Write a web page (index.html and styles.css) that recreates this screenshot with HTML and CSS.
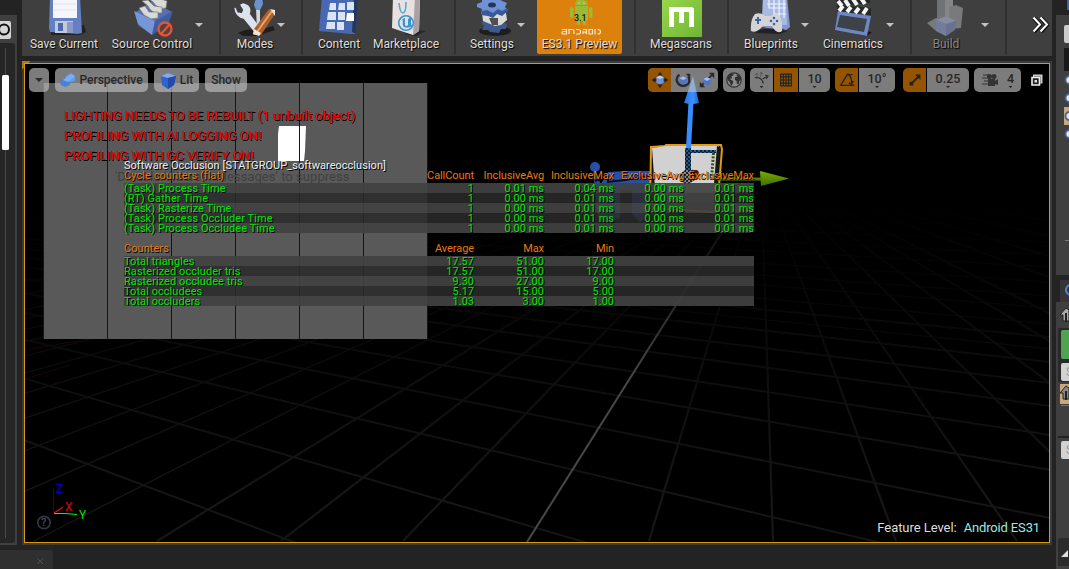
FILE: index.html
```html
<!DOCTYPE html>
<html lang="en">
<head>
<meta charset="utf-8">
<title>Level Editor</title>
<link rel="stylesheet" href="styles.css">
</head>
<body>
<div class="editor">
  <aside class="left-dock">
    <svg width="22" height="569">
      <rect y="15" width="17" height="530" fill="#3f3f3f"/>
      <rect x="-4" y="43" width="19" height="500" rx="3" fill="#262626"/>
      <rect x="-4" y="21" width="15" height="18" rx="2" fill="#d6d6d6"/>
      <circle cx="4" cy="29.500" r="5" fill="none" stroke="#111" stroke-width="2"/>
      <path d="M5.500 48V538" stroke="#4a4a4a"/>
      <rect x="2" y="75" width="7" height="75" rx="1.500" fill="#fff"/>
    </svg>
  </aside>

  <main class="center">
    <nav class="toolbar">
      <div class="group g-file">
        <button class="tool save"><svg class="icon" viewBox="0 0 56 37">
          <path d="M15 29L48 25 50 32 44 35H15Z" fill="#151515" opacity=".7"/>
          <path d="M14-4H44L46 33 42 34 14 32 13 28Z" fill="#6480c2"/>
          <path d="M17-4H41V18H17Z" fill="#f4f6fb"/><path d="M18 4H40M18 10H40" stroke="#dde2ee"/>
          <path d="M19 21H37V33H19Z" fill="#c3c9d8"/><path d="M22 23H27V31H22Z" fill="#4f68ad"/><path d="M31 22H37V33H31Z" fill="#8998c6"/>
        </svg><span>Save Current</span></button>
        <button class="tool source"><svg class="icon" viewBox="0 0 56 37">
          <path d="M12 12L28 1 48 12 44 20 28 35 14 25Z" fill="#5571b1"/>
          <path d="M10 11L31 21 28 35 14 24Z" fill="#7796d7"/><path d="M31 21L49 11 44 25 28 35Z" fill="#425d9d"/>
          <g fill="#d8dad8" stroke="#777" stroke-width=".7"><path d="M22-3L27-4 43 1 42 8Q34 10 29 2Z"/><path d="M18 1L24 0 30 6 38 7 38 13Q27 14 24 6Z"/><path d="M15 8L21 6 25 12 34 12 34 18 27 19 20 15Z"/></g>
          <circle cx="41" cy="29" r="6.500" fill="#4d4542" stroke="#e55335" stroke-width="2.300"/><path d="M37 34L46 24" stroke="#e55335" stroke-width="2.300"/>
        </svg><span>Source Control</span></button>
        <i class="caret"></i>
      </div>
      <div class="group g-modes">
        <button class="tool modes"><svg class="icon" viewBox="0 0 56 37">
          <path d="M11 33Q22 27 28 31L46 26 48 30 30 36H16Z" fill="#161616" opacity=".8"/>
          <path d="M14 5L17 10 15 14 10 13 8 8Q9 17 17 18L30 34Q34 34 34 30L22 14Q25 6 16 4Z" fill="#dce3ec" stroke="#dce3ec" stroke-width="1.400"/>
          <path d="M29 8H33V31H30Z" fill="#cfd7df"/><path d="M29-2Q32 1 35-4L36 4 33 10H29L27 5Z" fill="#6d91cb"/>
          <path d="M42 9L48 14 34 35 26 35 27 29Z" fill="#ab602e"/><path d="M45 11L30 32" stroke="#e6a46b" stroke-width="2"/><path d="M43 9L48 10V16Z" fill="#eee3d7"/><path d="M27 29L34 33 32 36 26 34Z" fill="#f4e6d3"/>
        </svg><span>Modes</span></button>
        <i class="caret"></i>
      </div>
      <div class="group g-content">
        <button class="tool content"><svg class="icon" viewBox="0 0 56 37">
          <path d="M11-4H46L45 34 40 34 8 31Z" fill="#4968b2"/><path d="M43-4H47L45 34 41 32Z" fill="#26375f"/>
          <g fill="#d9e3f6"><path d="M19 3H25V10H18ZM28 3H34V10H27ZM36 2H43V10H36ZM17 12H25V20H16ZM27 12H34V20H27ZM16 22H24V29H15ZM26 22H33V30H26Z"/></g><path d="M36 13H43V21H35Z" fill="#fff"/>
        </svg><span>Content</span></button>
        <button class="tool market"><svg class="icon" viewBox="0 0 56 37">
          <path d="M38 30L48 31 38 36 26 34Z" fill="#171717" opacity=".6"/>
          <path d="M15-3L42-3 41 31 35 35 14 28Z" fill="#e7e2e1"/><path d="M37-3H42L41 31 35 35Z" fill="#aaa1a5"/>
          <path d="M21 3Q22 13 25 13T28 2" fill="none" stroke="#5ba6d6" stroke-width="1.600"/>
          <circle cx="28" cy="23" r="7.300" fill="none" stroke="#3c94cf" stroke-width="1.600"/>
          <path d="M23 21Q25 18 27 18V25Q28 27 30 25V19L33 17V24L34 26Q30 29 26 27Q24 26 25 20Z" fill="#3c94cf"/>
        </svg><span>Marketplace</span></button>
      </div>
      <div class="group g-settings">
        <button class="tool settings"><svg class="icon" viewBox="0 0 56 37">
          <ellipse cx="31" cy="31" rx="16" ry="5" fill="#161616" opacity=".8"/>
          <path d="M17 22L24 20 36 21 43 24 42 29 37 29 35 33 26 32 24 30 18 30 20 26Z" fill="#40588b"/>
          <path d="M18 13H42L43 20 37 25 31 26 19 21Z" fill="#d9dad6"/><path d="M25 18H34V25H28Z" fill="#4e5050"/>
          <path d="M13 4L18 2 18-2 26-1 33-3 38 1 43 3 41 7 44 10 38 14 33 13 29 17 24 14 17 14 18 9 13 7Z" fill="#6f91d5"/><path d="M18 11L23 10 29 13 34 9 38 11 43 8 44 11 38 16 33 14 29 18 24 16 17 15Z" fill="#395998"/>
          <ellipse cx="28" cy="5" rx="4" ry="2.500" fill="#263659"/>
        </svg><span>Settings</span></button>
        <i class="caret"></i>
        <button class="tool preview"><svg class="icon" viewBox="0 0 56 37">
          <g fill="#9bbb37"><path d="M23 5Q23 0 29 0T36 5ZM23 6H36V19Q36 21 34 21V25H31V21H28V25H25V21Q23 21 23 19Z"/><rect x="18" y="7" width="3.500" height="11" rx="1.700"/><rect x="37" y="7" width="3.500" height="11" rx="1.700"/><path d="M24-2L26 3M35-2L33 3" stroke="#9bbb37"/></g>
          <circle cx="27" cy="3" r=".6" fill="#fff"/><circle cx="32" cy="3" r=".6" fill="#fff"/>
          <text x="22" y="21" class="version">3.1</text>
          <g fill="none" stroke="#f4e7ce" stroke-width="1.200"><path d="M10 29.500H14.500V34H11Q10 34 10 33T11 31.500H14M17 34V29.500H20Q22 29.500 22 31V34M24 29.500H26.500Q28.500 29.500 28.500 31.700T26.500 34H24M31 34V31M31 29.500H34.500V32H31M33 32L35 34M38 29.500H40.500V34H37V29.500ZM43 29V34.500M45.500 29.500H46Q48.500 29.500 48.500 31.700T46 34H45.500"/></g>
        </svg><span>ES3.1 Preview</span></button>
      </div>
      <div class="group g-mega">
        <button class="tool mega"><svg class="icon" viewBox="0 0 56 37">
          <defs><linearGradient id="mega" x2="1" y2="1"><stop stop-color="#9bd74e"/><stop offset="1" stop-color="#6fb633"/></linearGradient></defs>
          <path d="M9-3H49V37H9Z" fill="url(#mega)"/><path d="M16 27V7H38Q41 7 41 10V27H36V12H31V23H26V12H21V27Z" fill="#fff"/>
        </svg><span>Megascans</span></button>
      </div>
      <div class="group g-blue">
        <button class="tool blue"><svg class="icon" viewBox="0 0 56 37">
          <path d="M20-4H44L47 27 42 31 19 27Z" fill="#8298cf"/><path d="M20-4H43L44 25 19 24Z" fill="#a8bae2"/>
          <path d="M26-2V8H43M31-2V14H43M36-2V18M41-2V18M24 4H43" fill="none" stroke="#eef3ff" stroke-width="1.200"/>
          <path d="M10 30L38 28 45 31 37 34 13 33Z" fill="#171717" opacity=".7"/>
          <path d="M12 14Q18 12 22 16H28Q33 12 37 16Q40 24 39 31Q34 35 29 26H20Q13 34 8 31Q7 20 12 14Z" fill="#d4d4d5"/>
          <path d="M12 20H18M15 17V24" stroke="#3d62ad" stroke-width="2"/><g fill="#3d62ad"><circle cx="31" cy="18" r="1.300"/><circle cx="31" cy="24" r="1.300"/><circle cx="28" cy="21" r="1.300"/><circle cx="34" cy="21" r="1.300"/></g>
        </svg><span>Blueprints</span></button>
        <i class="caret"></i>
        <button class="tool cine"><svg class="icon" viewBox="0 0 56 37">
          <path d="M35 31L47 32 42 36 31 34Z" fill="#171717"/><path d="M13 11L46 16 42 36 10 30Z" fill="#6d87c4"/><path d="M15 15L42 19 39 32 12 27Z" fill="#3d4148"/>
          <path d="M12 5L46 8 46 15 12 11ZM11-1L45-5V3L12 6Z" fill="#24282b"/><path d="M13 1L17 6M20 0L24 6M28-1L32 5M36-2L40 4M18 6L14 11M26 7L22 12M34 8L30 13M42 8L38 14" stroke="#f5f5f3" stroke-width="4"/>
        </svg><span>Cinematics</span></button>
        <i class="caret"></i>
      </div>
      <div class="group g-build">
        <button class="tool build"><svg class="icon" viewBox="0 0 56 37">
          <path d="M19-3L31-3 35 0V24L24 27 19 21Z" fill="#707274"/><path d="M27-3H35V21H27Z" fill="#858688"/>
          <path d="M31 7L38 5 45 8 43 28 32 29Z" fill="#797a7c"/><path d="M9 23L18 18 29 21 29 30 18 31Z" fill="#77797b"/>
          <path d="M18 20L28 16 38 21 37 30 28 36 18 31Z" fill="#6b7290"/><path d="M18 20L28 24 38 21 28 16Z" fill="#858ba4"/><path d="M28 24V36L18 31V20Z" fill="#747b9b"/>
        </svg><span>Build</span></button>
        <i class="caret"></i>
      </div>
      <div class="more"><svg width="17" height="18"><path d="M2 2L8 9 2 16M9 2L15 9 9 16" fill="none" stroke="#111" stroke-width="4"/><path d="M1.500 1.500L8 8.500 1.500 15.500M8.500 1.500L15 8.500 8.500 15.500" fill="none" stroke="#fff" stroke-width="2"/></svg></div>
    </nav>

    <section class="frame">
      <div class="viewport">
        <svg class="scene" viewBox="25 64 1024 478">
          <defs>
            <linearGradient id="fade" gradientUnits="userSpaceOnUse" x1="0" y1="200" x2="0" y2="500"><stop stop-color="#000"/><stop offset=".4" stop-color="#090909"/><stop offset="1" stop-color="#161616"/></linearGradient>
            <linearGradient id="axis" gradientUnits="userSpaceOnUse" x1="0" y1="190" x2="0" y2="380"><stop stop-color="#000"/><stop offset=".5" stop-color="#242424"/><stop offset="1" stop-color="#484848"/></linearGradient>
            <linearGradient id="cone" x2="1"><stop stop-color="#2872e2"/><stop offset=".6" stop-color="#3d91ff"/><stop offset="1" stop-color="#1765c7"/></linearGradient>
            <linearGradient id="cone2" x2="0" y2="1"><stop stop-color="#78ae00"/><stop offset="1" stop-color="#426b00"/></linearGradient>
            <pattern id="bluecheck" width="4" height="4" patternUnits="userSpaceOnUse"><path d="M0 0H4V4H0Z" fill="#111c25"/><path d="M0 0H2V2H0ZM2 2H4V4H2Z" fill="#235b91"/></pattern>
            <pattern id="graycheck" width="4" height="4" patternUnits="userSpaceOnUse"><path d="M0 0H4V4H0Z" fill="#222"/><path d="M0 0H2V2H0ZM2 2H4V4H2Z" fill="#888"/></pattern>
          </defs>
          <path d="M761 170L-1692 541M761 170L-1446 541M761 170L-1200 541M761 170L-1077 541M761 170L-954 541M761 170L-831 541M761 170L-708 541M761 170L-585 541M761 170L-462 541M761 170L-339 541M761 170L-212 541M761 170L-89 541M761 170L34 541" stroke="url(#fade)" stroke-width="1.300" fill="none"/>
          <path d="M761 170L157 541M761 170L281 541M761 170L403 541M761 170L649 541M761 170L773 541M761 170L896 541M761 170L1017 541M761 170L1141 541M761 170L1264 541M761 170L1387 541M761 170L1510 541M761 170L1756 541M761 170L2002 541M761 170L2371 541M761 170L2863 541" stroke="url(#fade)" stroke-width="2.200" fill="none"/>
          <path d="M-690 170L1050 1783M-690 170L1050 1105M-690 170L1050 828M-690 170L1050 678M-690 170L1050 583M-690 170L1050 518M-690 170L1050 470M-690 170L1050 435M-690 170L1050 406M-690 170L1050 383M-690 170L1050 362M-690 170L1050 337" stroke="url(#fade)" stroke-width="1.900" fill="none"/>
          <path d="M-690 170L1050 349M-690 170L1050 324M-690 170L1050 308M-690 170L1050 296M-690 170L1050 282M-690 170L1050 267M-690 170L1050 255M-690 170L1050 242" stroke="url(#fade)" fill="none"/>
          <path d="M761 170L527 542" stroke="url(#axis)" stroke-width="2"/>
          <path d="M25 350L95 338M25 379L70 365" stroke="#180806"/>
          <path d="M43 83H427V339H43Z" fill="#595959"/>
          <path d="M43.500 83V339M107.500 83V339M171.500 83V339M235.500 83V339M299.500 83V339M363.500 83V339M427.500 83V339" stroke="#0000b8"/>
          <path d="M279 126H306L305 151 304 161H278L278 134Z" fill="#fff"/>
          <path d="M299.500 126V161" stroke="#0000b8"/>
          <g fill="#2350a6"><circle cx="595" cy="167" r="5" fill="#294fa8"/><path d="M593 171L601 184 608 172 625 171H656V184L648 216 640 222 632 214 632 190H620V218L607 223 598 216Z"/></g>
          <path d="M595 181L608 177 608 182 625 180 649 176" stroke="#080b18" stroke-width="2" fill="none"/>
          <path d="M651 147L665 146 666 145H721L722 149 717 211 712 212 650 208Z" fill="#111" stroke="#e09a18" stroke-width="2"/>
          <path d="M652 148L666 146H719L714 203H656Z" fill="#d1d1d1"/>
          <path d="M717 146L720 147 717 183 714 183Z" fill="#171717"/>
          <path d="M691 156V170Q699 168 699 174T690 182Z" fill="#541405"/><path d="M693 156V170H712V156Z" fill="#d1d1d1"/>
          <path d="M691 150H716V153H691V180H685V148H691Z" fill="url(#bluecheck)"/>
          <path d="M713.500 153L711.500 179" stroke="#385115" stroke-width="3" stroke-dasharray="2 1.500"/>
          <circle cx="687" cy="177" r="7" fill="url(#graycheck)"/>
          <path d="M717 179H761" stroke="#4e7f00" stroke-width="3"/><path d="M760 171L789 178.500 761 186Z" fill="url(#cone2)"/>
          <path d="M691 102L688.500 148" stroke="#398cff" stroke-width="5"/><path d="M693 76L699 103Q692 105 684 103Z" fill="url(#cone)"/>
          <path d="M53.500 489V513" stroke="#0000c8"/><path d="M54 513L63 507" stroke="#f00" stroke-width="1.200"/><path d="M54 513.500H65L77 514.500" stroke="#0f0" fill="none"/>
          <circle cx="44" cy="522.500" r="6.200" stroke="#303843" stroke-width="1.700" fill="none"/>
        </svg>

        <div class="view-controls">
          <button class="pill menu"><i class="caret dark"></i></button>
          <button class="pill perspective"><svg width="16" height="16"><path d="M0 10L5 6 10 8 10 13 5 15 1 13Z" fill="#4783d6"/><path d="M6 4L11 1 15 4 15 9 10 10 6 8Z" fill="#629eeb"/><path d="M3 8L11 2 15 4 8 10Z" fill="#79b0f5"/></svg>Perspective</button>
          <button class="pill lit"><svg width="17" height="17"><path d="M1 4L8 1 16 4 14 13 8 17 2 13Z" fill="#3163ce"/><path d="M1 4L8 6 16 4 8 1Z" fill="#86a9ed"/><path d="M8 6L16 4 14 13 8 17Z" fill="#2449aa"/></svg>Lit</button>
          <button class="pill show">Show</button>
          <div class="spring"></div>
          <div class="pill transform">
            <span class="cell on w23"><svg class="mini" viewBox="0 0 20 20"><path d="M10 2V18M2 10H18" stroke="#242424" stroke-width="2"/><path d="M10 1L13 5H7ZM10 19L7 15H13ZM1 10L5 7V13ZM19 10L15 13V7Z" fill="#242424"/><path d="M6 7L10 5 14 7V13L10 15 6 13Z" fill="#7192df"/><path d="M6 7L10 9 14 7 10 5Z" fill="#bccdf3"/></svg></span>
            <span class="cell w24"><svg class="mini" viewBox="0 0 20 20"><path d="M6 4Q1 8 4 13T13 16T16 6" fill="none" stroke="#292929" stroke-width="2.500"/><path d="M13 3H18V8Z" fill="#292929"/><path d="M6 8L10 6 14 8V13L10 15 6 13Z" fill="#4d75cc"/><path d="M6 8L10 10 14 8 10 6Z" fill="#a8bdf2"/></svg></span>
            <span class="cell w23"><svg class="mini" viewBox="0 0 20 20"><path d="M3 17L17 3" stroke="#292929" stroke-width="2"/><path d="M12 2H18V8ZM2 12V18H8Z" fill="#292929"/><path d="M6 9L10 7 14 9V14L10 16 6 14Z" fill="#4d75cc"/><path d="M6 9L10 11 14 9 10 7Z" fill="#a8bdf2"/></svg></span>
          </div>
          <div class="pill globe"><svg class="mini" viewBox="0 0 20 20"><circle cx="10" cy="10" r="8" fill="#8b8b8b" stroke="#303030" stroke-width="1.300"/><path d="M3 7L6 3 10 3 9 5 7 6 8 8 5 9 9 11 9 13 7 17 5 12 3 10ZM12 4L16 5 18 9 16 11 15 15 13 14 13 11 11 10 11 7 14 6Z" fill="#303030"/></svg></div>
          <div class="pill snap">
            <span class="cell w23 stack"><svg class="surface" viewBox="0 0 16 13"><path d="M1 7Q8 5 10 13" fill="none" stroke="#333" stroke-width="1.400"/><path d="M3 6V2M1 4L3 2 5 4M7 6L8 1M6 2L8 1 9 3" fill="none" stroke="#555"/><path d="M9 8L15 5M12 4L15 5 13 8" fill="none" stroke="#333" stroke-width="1.200"/></svg><i class="dot"></i></span>
            <span class="cell on w24"><svg class="mini" viewBox="0 0 20 20"><path d="M4 3V17M7 3V17M10 3V17M13 3V17M16 3V17M3.500 3.500H16.500M3.500 6.500H16.500M3.500 10H16.500M3.500 13.500H16.500M3.500 16.500H16.500" stroke="#222" stroke-width="1.200"/></svg></span>
            <span class="cell w31 stack"><b>10</b><i class="dot"></i></span>
          </div>
          <div class="pill angle"><span class="cell on w23"><svg class="mini" viewBox="0 0 20 20"><path d="M11 3L3 16H18M11 3Q16 8 15 14M12 4L16 4M12 13L15 15 17 11" fill="none" stroke="#252525" stroke-width="1.500"/></svg></span><span class="cell w36 stack"><b>10°</b><i class="dot"></i></span></div>
          <div class="pill scale"><span class="cell on w23"><svg class="mini" viewBox="0 0 20 20"><path d="M6 14L15 5" stroke="#222" stroke-width="2"/><path d="M10 4H16V10ZM4 12H8V16H4Z" fill="#222"/></svg></span><span class="cell w42 stack"><b>0.25</b><i class="dot"></i></span></div>
          <div class="pill camera"><svg width="17" height="14"><path d="M1 2H8M0 5H7M2 8H7M0 11H7" stroke="#333"/><path d="M6 6H13V8L16 6V12L13 11V13H6Z" fill="#333"/><circle cx="7.500" cy="3.500" r="2.500" fill="#333"/><circle cx="12" cy="3.500" r="2.500" fill="#333"/></svg><span class="stack"><b>4</b><i class="dot"></i></span></div>
          <svg class="maximize" width="12" height="12"><path d="M2 .5H11.500V9.500H2Z" fill="#ccc"/><path d="M3 2.500H9.500V9H3Z" fill="#222"/><path d="M1 3.500H8.500V11H1Z" fill="#222" stroke="#eee" stroke-width="1.600"/><path d="M3.500 6H6V8.500H3.500Z" fill="#ddd"/></svg>
        </div>

        <div class="messages"><p class="m1">LIGHTING NEEDS TO BE REBUILT (1 unbuilt object)</p><p class="m2">PROFILING WITH AI LOGGING ON!</p><p class="m3">PROFILING WITH GC VERIFY ON!</p></div>
        <p class="suppress">'DisableAllScreenMessages' to suppress</p>

        <div class="stats">
          <div class="stat-title">Software Occlusion [STATGROUP_softwareocclusion]</div>
          <div class="row head"><span>Cycle counters (flat)</span><span>CallCount</span><span>InclusiveAvg</span><span>InclusiveMax</span><span>ExclusiveAvg</span><span>ExclusiveMax</span></div>
          <div class="rows">
            <div class="row"><span>(Task) Process Time</span><span>1</span><span>0.01 ms</span><span>0.04 ms</span><span>0.00 ms</span><span>0.01 ms</span></div>
            <div class="row"><span>(RT) Gather Time</span><span>1</span><span>0.00 ms</span><span>0.01 ms</span><span>0.00 ms</span><span>0.01 ms</span></div>
            <div class="row"><span>(Task) Rasterize Time</span><span>1</span><span>0.00 ms</span><span>0.01 ms</span><span>0.00 ms</span><span>0.01 ms</span></div>
            <div class="row"><span>(Task) Process Occluder Time</span><span>1</span><span>0.00 ms</span><span>0.01 ms</span><span>0.00 ms</span><span>0.01 ms</span></div>
            <div class="row"><span>(Task) Process Occludee Time</span><span>1</span><span>0.00 ms</span><span>0.01 ms</span><span>0.00 ms</span><span>0.01 ms</span></div>
          </div>
          <div class="row head counters"><span>Counters</span><span>Average</span><span>Max</span><span>Min</span></div>
          <div class="rows">
            <div class="row"><span>Total triangles</span><span>17.57</span><span>51.00</span><span>17.00</span></div>
            <div class="row"><span>Rasterized occluder tris</span><span>17.57</span><span>51.00</span><span>17.00</span></div>
            <div class="row"><span>Rasterized occludee tris</span><span>9.30</span><span>27.00</span><span>9.00</span></div>
            <div class="row"><span>Total occludees</span><span>5.17</span><span>15.00</span><span>5.00</span></div>
            <div class="row"><span>Total occluders</span><span>1.03</span><span>3.00</span><span>1.00</span></div>
          </div>
        </div>

        <span class="axis z">Z</span><span class="axis x">X</span><span class="axis y">Y</span><span class="help">?</span>
        <div class="feature"><span>Feature Level:</span><span class="level">Android ES31</span></div>
      </div>
    </section>
  </main>

  <aside class="right-dock">
    <svg width="13" height="569" viewBox="1056 0 13 569">
      <path d="M1060 0H1069V15H1056V275H1069V302H1056V569H1069V0Z" fill="#3f3f3f"/>
      <path d="M1056 15H1069V275H1056ZM1056 302H1069V569H1056Z" fill="#3f3f3f"/>
      <path d="M1056 275H1069V280H1060V302H1056Z" fill="#232323"/><path d="M1060 280H1069V302H1060Z" fill="#353535"/>
      <path d="M1067 0H1069V10H1067Z" fill="#3e64a8"/>
      <rect x="1064" y="25" width="8" height="18" rx="2" fill="#ccc"/><path d="M1064 48H1069V71H1064Z" fill="#191919"/>
      <path d="M1064 107H1069V125H1064Z" fill="#c9a77d"/>
      <g fill="#e2e6ed" stroke="#3f5f9f" stroke-width="1.800"><circle cx="1069.500" cy="80" r="4"/><circle cx="1069.500" cy="98" r="4"/><circle cx="1069.500" cy="116" r="4"/><circle cx="1069.500" cy="134" r="4"/></g>
      <path d="M1065 240.500H1069" stroke="#777"/><circle cx="1071" cy="290" r="5" fill="none" stroke="#4f83cf" stroke-width="2"/>
      <path d="M1058 328H1069V382H1058Z" fill="#292929"/><rect x="1061" y="330" width="12" height="29" rx="2" fill="#4fa451"/><rect x="1061" y="363" width="12" height="18" rx="2" fill="#d2d2d2"/>
      <path d="M1060 384H1069V404H1060Z" fill="#c9a77d"/><path d="M1060 315L1066 308 1069 310V321H1063V315Z" fill="#aaa" stroke="#222"/><path d="M1060 393L1066 386 1069 388V399H1063V393Z" fill="#888" stroke="#222"/>
      <path d="M1066 313V322M1066 391V400" stroke="#222" stroke-width="2"/>
      <path d="M1061 405.500H1069" stroke="#777"/><path d="M1058 437H1069" stroke="#222" stroke-width="2"/><rect x="1061" y="441" width="12" height="18" rx="2" fill="#d2d2d2"/>
      <text x="1066" y="376" class="search">S</text><text x="1066" y="454" class="search">S</text>
      <path d="M1058 541Q1058 538 1061 538H1069V566H1058Z" fill="#2b2b2b"/><path d="M1061 557L1068 550V557Z" fill="#ddd"/>
    </svg>
  </aside>
  <div class="bottom-tab"><svg width="7" height="7"><path d="M.5 .5L6 6M6 .5L.5 6" stroke="#555"/></svg></div>
</div>
</body>
</html>
```

FILE: styles.css
```css
* { box-sizing: border-box; }
body { margin: 0; background: #232323; font-family: Roboto, "Liberation Sans", sans-serif; overflow: hidden; }
button { border: 0; padding: 0; background: none; font: inherit; color: inherit; }
svg { display: block; flex: none; }
p { margin: 0; }
.editor { position: relative; width: 1069px; height: 569px; display: grid; grid-template-columns: 22px 1030px 13px; column-gap: 0; overflow: hidden; }
.right-dock { margin-left: 4px; width: 13px; }
.center { display: flex; flex-direction: column; gap: 5px; }

.toolbar { display: flex; height: 56px; background: #3f3f3f; }
.group { display: flex; height: 54px; border-right: 2px solid #303030; }
.g-file { width: 199px; }
.g-modes { width: 82px; padding-left: 12px; }
.g-content { width: 153px; padding-left: 6px; }
.g-settings { width: 180px; padding-left: 11px; }
.g-mega { width: 93px; padding-left: 10px; }
.g-blue { width: 183px; padding-left: 12px; }
.g-build { width: 95px; padding-left: 4px; }
.tool { display: flex; flex-direction: column; align-items: center; flex: none; height: 54px; font-size: 12px; line-height: 14px; color: #dedede; text-shadow: 1px 1px 1px #000; white-space: nowrap; }
.icon { width: 56px; height: 37px; }
.save, .source { width: 84px; }
.source { margin-left: 4px; letter-spacing: .1px; }
.modes { width: 44px; }
.content, .blue, .build { width: 60px; }
.market { width: 74px; }
.settings { width: 50px; }
.preview { width: 85px; height: 54px; margin-left: 12px; background: #dc820c; border-radius: 0 0 2px 2px; }
.mega { width: 70px; }
.cine { width: 66px; margin-left: 11px; }
.build { color: #858585; }
.g-file .caret { margin-left: 1px; }
.g-build .caret { margin-left: 5px; }
.version { font: 500 9px Roboto, sans-serif; fill: #171717; text-shadow: none; }
.caret { width: 8px; height: 4px; margin-top: 23px; background: #c4c4c4; clip-path: polygon(0 0, 100% 0, 50% 100%); flex: none; }
.caret.dark { margin: 0; background: #292929; }
.more { padding: 16px 0 0 25px; }

.frame { height: 484px; padding: 2px; background: linear-gradient(135deg, #a77b1a 0 6px, #3b3b3b 6px); }
.viewport { position: relative; width: 1026px; height: 480px; border: 1px solid #d89810; background: #000; }
.scene { position: absolute; inset: 0; width: 1024px; height: 478px; }
.view-controls { position: absolute; left: 4px; top: 4px; width: 1014px; height: 24px; display: flex; align-items: center; font-size: 12px; font-weight: 500; color: #272727; }
.pill { height: 24px; display: flex; align-items: center; justify-content: center; border-radius: 5px; background: rgba(190,190,190,.65); overflow: hidden; flex: none; }
.menu { width: 20px; margin-right: 6px; }
.perspective { width: 93px; gap: 3px; margin-right: 6px; }
.lit { width: 45px; gap: 3px; margin-right: 6px; }
.show { width: 42px; }
.spring { flex: 1; }
.cell { display: flex; height: 24px; align-items: center; justify-content: center; }
.on { background: #955400; }
.w23 { width: 23px; }
.w24 { width: 24px; }
.w31 { width: 31px; }
.w36 { width: 36px; }
.w42 { width: 42px; }
.transform { margin-right: 5px; }
.globe { width: 22px; margin-right: 5px; }
.snap { gap: 1px; margin-right: 5px; }
.angle { gap: 1px; margin-right: 8px; }
.scale { gap: 1px; margin-right: 5px; }
.snap, .angle, .scale { background: none; }
.snap .cell:not(.on), .angle .cell:not(.on), .scale .cell:not(.on) { background: rgba(190,190,190,.65); }
.mini { width: 18px; height: 18px; }
.camera { width: 47px; gap: 8px; padding-left: 1px; margin-right: 10px; }
.pill .stack { display: flex; flex-direction: column; align-items: center; justify-content: flex-start; height: 24px; padding-top: 3px; }
.stack b { font-weight: 500; font-size: 12.500px; line-height: 15px; }
.dot { width: 4px; height: 2px; background: #222; clip-path: polygon(0 0, 100% 0, 50% 100%); }
.surface { width: 15px; height: 13px; margin-bottom: 2px; }

.messages { position: absolute; left: 39px; top: 42px; font-size: 13px; line-height: 20px; letter-spacing: -.02px; color: #f00; text-shadow: 1px 1px 0 #000; white-space: nowrap; }
.suppress { position: absolute; left: 90px; top: 105px; font-size: 13px; line-height: 16px; letter-spacing: .05px; color: #404040; white-space: nowrap; }
.stats { position: absolute; left: 99px; top: 96px; width: 630px; font-size: 11px; line-height: 12px; letter-spacing: .06px; color: #00e600; text-shadow: 1px 1px 0 #000; white-space: nowrap; }
.stat-title { height: 10px; color: #eee; letter-spacing: .03px; }
.row { display: grid; grid-template-columns: 280px repeat(5, 70px); height: 10px; }
.row span + span { justify-self: end; letter-spacing: 0; }
.head { height: 13px; color: #e97910; }
.head span + span { letter-spacing: -.08px; }
.counters { margin-top: 10px; }
.rows .row:nth-child(odd) { background: rgba(66,66,66,.93); }
.rows .row:nth-child(even) { background: rgba(43,43,43,.87); }

.axis { position: absolute; font-size: 12px; line-height: 14px; }
.z { left: 31px; top: 418px; color: #0000d0; }
.x { left: 40px; top: 436px; color: #e60000; }
.y { left: 54px; top: 444px; color: #00e000; }
.help { position: absolute; left: 16px; top: 452px; font-size: 11px; line-height: 14px; font-weight: 500; color: #414954; }
.feature { position: absolute; right: 9px; bottom: 6px; display: flex; gap: 7px; font-size: 13px; line-height: 16px; letter-spacing: -.05px; color: #ddd; white-space: nowrap; }
.level { color: #9de7e4; letter-spacing: -.15px; }
.search { font: 12px Roboto, sans-serif; fill: #999; }
.bottom-tab { position: absolute; left: 0; top: 550px; width: 53px; height: 19px; padding: 8px 0 0 37px; background: #2f2f2f; border-radius: 0 2px 0 0; }
```
